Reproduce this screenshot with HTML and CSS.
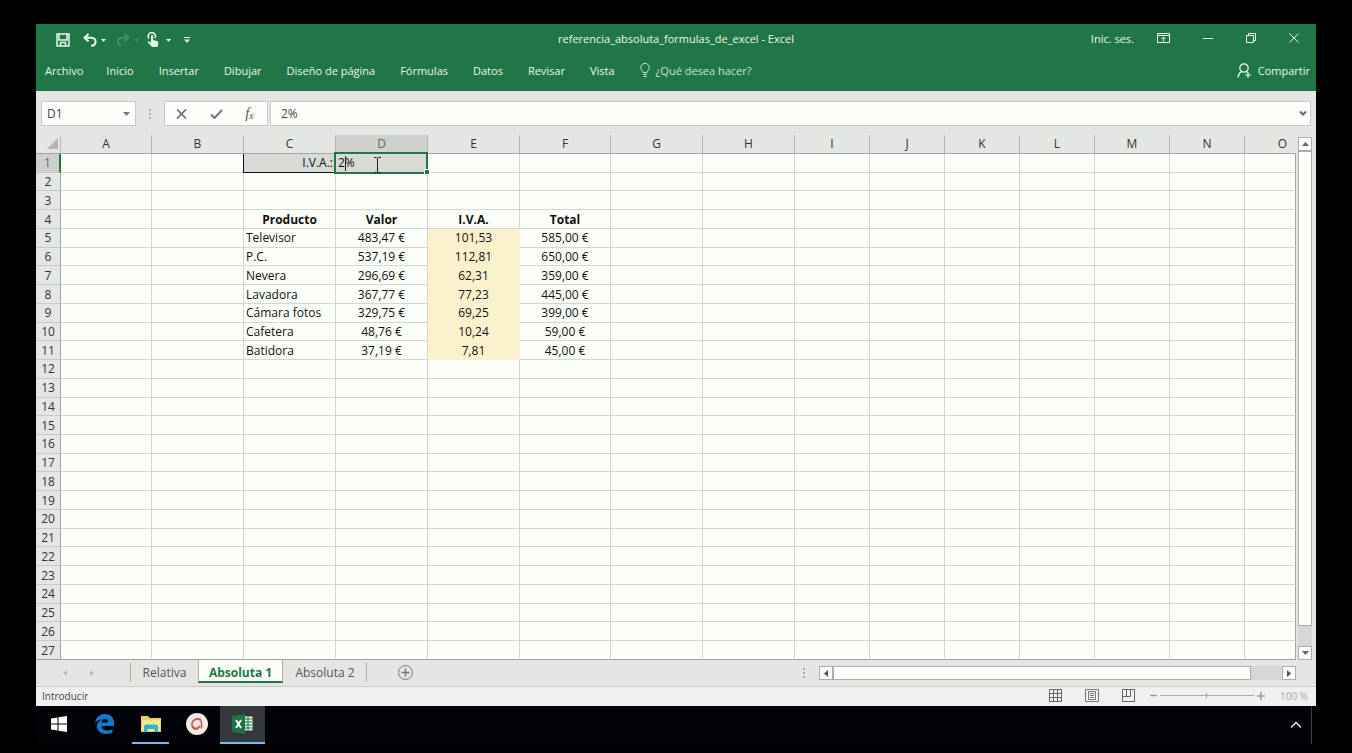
FILE: index.html
```html
<!DOCTYPE html>
<html lang="es">
<head>
<meta charset="utf-8">
<title>referencia_absoluta_formulas_de_excel - Excel</title>
<link rel="stylesheet" href="styles.css">
</head>
<body>
<div class="desktop">
<main class="app">
  <header class="ribbon">
    <div class="titlebar">
      <div class="quick">
        <button class="icon-btn save" aria-label="Guardar"><svg width="14" height="14" viewBox="0 0 14 14" fill="none" stroke="currentColor" stroke-width="1.500"><path d="M1 1h12v12H1zM3 1v6h8V1M4.500 13V9.500h5V13"/></svg></button>
        <button class="icon-btn undo" aria-label="Deshacer"><svg width="14" height="14" viewBox="0 0 14 14" fill="none" stroke="currentColor" stroke-width="2"><path d="M5.500 1L1.500 4.700l4 3.800M2 4.700h6.500c5.500 0 5.500 8-.5 8"/></svg></button>
        <button class="icon-btn caret" aria-label="Opciones de deshacer"><svg width="5" height="3" viewBox="0 0 5 3" fill="currentColor"><path d="M0 0h5L2.500 3z"/></svg></button>
        <button class="icon-btn redo" aria-label="Rehacer" disabled><svg width="14" height="14" viewBox="0 0 14 14" fill="none" stroke="currentColor" stroke-width="2"><path d="M8.500 1l4 3.700-4 3.800M12 4.700H6c-6 0-5 7-1 8"/></svg></button>
        <button class="icon-btn caret dim" aria-label="Opciones de rehacer" disabled><svg width="5" height="3" viewBox="0 0 5 3" fill="currentColor"><path d="M0 0h5L2.500 3z"/></svg></button>
        <button class="icon-btn touch" aria-label="Modo mouse o táctil"><svg width="12" height="16" viewBox="0 0 12 16"><path d="M2 6.500A3.600 3.600 0 1 1 8 6" fill="none" stroke="currentColor" stroke-width="1.500"/><path d="M4 4c0-1.500 2.200-1.500 2.200 0v4l4.300 1.200c1 .3 1 1 .8 2L10.500 15H5L1 10.500c-.5-1 .5-1.600 1.300-1L4 10.700z" fill="currentColor"/></svg></button>
        <button class="icon-btn caret" aria-label="Opciones de modo"><svg width="5" height="3" viewBox="0 0 5 3" fill="currentColor"><path d="M0 0h5L2.500 3z"/></svg></button>
        <button class="icon-btn custom" aria-label="Personalizar barra"><svg width="6" height="6" viewBox="0 0 6 6" fill="currentColor"><path d="M0 0h6v1H0zM0 2.500h6L3 6z"/></svg></button>
      </div>
      <h1 class="title">referencia_absoluta_formulas_de_excel - Excel</h1>
      <div class="window-controls">
        <button class="signin">Inic. ses.</button>
        <button class="icon-btn" aria-label="Opciones de cinta"><svg width="13" height="10" viewBox="0 0 13 10" fill="none" stroke="currentColor"><path d="M.5.5h12v9H.5zM.5 2.500h12M6.500 8.500V4M4.500 6l2-2 2 2"/></svg></button>
        <button class="icon-btn" aria-label="Minimizar"><svg width="10" height="10" viewBox="0 0 10 10" stroke="currentColor"><path d="M0 5.500h10"/></svg></button>
        <button class="icon-btn" aria-label="Restaurar"><svg width="10" height="10" viewBox="0 0 10 10" fill="none" stroke="currentColor"><path d="M.5 2.500h7v7h-7zM2.500 2.500v-2h7v7h-2"/></svg></button>
        <button class="icon-btn" aria-label="Cerrar"><svg width="10" height="10" viewBox="0 0 10 10" stroke="currentColor"><path d="M.5.5l9 9M9.500.5l-9 9"/></svg></button>
      </div>
    </div>
    <nav class="menu">
      <button class="menu-item file">Archivo</button>
      <button class="menu-item">Inicio</button>
      <button class="menu-item">Insertar</button>
      <button class="menu-item">Dibujar</button>
      <button class="menu-item">Diseño de página</button>
      <button class="menu-item">Fórmulas</button>
      <button class="menu-item">Datos</button>
      <button class="menu-item">Revisar</button>
      <button class="menu-item">Vista</button>
      <button class="menu-item tell"><svg width="10" height="14" viewBox="0 0 10 14" fill="none" stroke="currentColor"><path d="M3 9.500C3 7.500.7 7 .7 4.700a4.300 4.300 0 0 1 8.600 0C9.300 7 7 7.500 7 9.500zM3 11.500h4M3.500 13.500h3"/></svg>¿Qué desea hacer?</button>
      <button class="menu-item share"><svg width="15" height="15" viewBox="0 0 15 15" fill="none" stroke="currentColor" stroke-width="1.200"><circle cx="7" cy="5" r="4.200"/><path d="M1 14.500c.3-3.500 2-5 3.500-6M9.500 8.500l1 .7M11 9v6M8 12h6"/></svg>Compartir</button>
    </nav>
  </header>

  <section class="formula-bar">
    <div class="name-box"><input aria-label="Cuadro de nombres" value="D1"><svg width="7" height="4" viewBox="0 0 7 4" fill="#777"><path d="M0 0h7L3.500 4z"/></svg></div>
    <svg class="grip" width="2" height="10" viewBox="0 0 2 10" fill="#aaa"><path d="M0 0h2v2H0zM0 4h2v2H0zM0 8h2v2H0z"/></svg>
    <div class="formula-actions">
      <button aria-label="Cancelar"><svg width="11" height="10" viewBox="0 0 11 10" stroke="#666" stroke-width="1.600"><path d="M1 .5l9 9M10 .5l-9 9"/></svg></button>
      <button aria-label="Introducir"><svg width="13" height="10" viewBox="0 0 13 10" fill="none" stroke="#777" stroke-width="2"><path d="M1 5.500L4.500 9 12 1"/></svg></button>
      <button class="fx" aria-label="Insertar función"><i>f</i><small>x</small></button>
    </div>
    <div class="formula-box"><input aria-label="Barra de fórmulas" value="2%"><svg width="8" height="5" viewBox="0 0 8 5" fill="none" stroke="#666" stroke-width="2"><path d="M1 .5l3 3 3-3"/></svg></div>
  </section>

  <section class="workspace">
    <div class="sheet">
      <table class="grid">
        <colgroup><col class="c-head"><col class="c-edge"><col class="c-wide"><col class="c-wide"><col class="c-wide"><col class="c-wide"><col class="c-edge"><col class="c-wide"><col class="c-wide"><col class="c-mid"><col class="c-mid"><col class="c-mid"><col class="c-mid"><col class="c-mid"><col class="c-mid"><col></colgroup>
        <thead><tr id="letters"></tr></thead>
        <tbody id="rows"></tbody>
      </table>
    </div>
    <div class="vscroll">
      <button class="scroll-btn" aria-label="Subir"><svg width="7" height="4" viewBox="0 0 7 4" fill="#666"><path d="M0 4h7L3.500 0z"/></svg></button>
      <div class="vtrack"><div class="vthumb"></div></div>
      <button class="scroll-btn" aria-label="Bajar"><svg width="7" height="4" viewBox="0 0 7 4" fill="#666"><path d="M0 0h7L3.500 4z"/></svg></button>
    </div>
  </section>

  <section class="tabs-row">
    <div class="tabs">
      <div class="tab-nav">
        <button class="icon-btn" aria-label="Hoja anterior"><svg width="4" height="6" viewBox="0 0 4 6" fill="#bbb"><path d="M4 0v6L0 3z"/></svg></button>
        <button class="icon-btn" aria-label="Hoja siguiente"><svg width="4" height="6" viewBox="0 0 4 6" fill="#bbb"><path d="M0 0v6l4-3z"/></svg></button>
      </div>
      <button class="tab first">Relativa</button>
      <button class="tab active">Absoluta 1</button>
      <button class="tab last">Absoluta 2</button>
      <button class="icon-btn add" aria-label="Hoja nueva"><svg width="15" height="15" viewBox="0 0 15 15" fill="none" stroke="#777"><circle cx="7.500" cy="7.500" r="7"/><path d="M7.500 3.500v8M3.500 7.500h8" stroke-width="1.500"/></svg></button>
      <svg class="grip tab-grip" width="2" height="10" viewBox="0 0 2 10" fill="#aaa"><path d="M0 0h2v2H0zM0 4h2v2H0zM0 8h2v2H0z"/></svg>
    </div>
    <div class="hscroll">
      <button class="scroll-btn" aria-label="Izquierda"><svg width="4" height="7" viewBox="0 0 4 7" fill="#555"><path d="M4 0v7L0 3.500z"/></svg></button>
      <div class="htrack"><div class="hthumb"></div></div>
      <button class="scroll-btn" aria-label="Derecha"><svg width="4" height="7" viewBox="0 0 4 7" fill="#555"><path d="M0 0v7l4-3.500z"/></svg></button>
    </div>
  </section>

  <footer class="status">
    <span>Introducir</span>
    <div class="views">
      <button class="icon-btn" aria-label="Normal"><svg width="13" height="13" viewBox="0 0 13 13" fill="none" stroke="#666"><path d="M.5.5h12v12H.5zM4.500.5v12M8.500.5v12M.5 4.500h12M.5 8.500h12"/></svg></button>
      <button class="icon-btn" aria-label="Diseño de página"><svg width="14" height="13" viewBox="0 0 14 13" fill="none" stroke="#777"><path d="M.5.5h13v12H.5zM3.500 2.500h7v8h-7zM5 4.500h4M5 6.500h4M5 8.500h4"/></svg></button>
      <button class="icon-btn" aria-label="Saltos de página"><svg width="13" height="13" viewBox="0 0 13 13" fill="none" stroke="#666"><path d="M.5.5h12v12H.5zM.5 7.500h8v-7M4.500.5v7"/></svg></button>
    </div>
    <div class="zoom">
      <button class="icon-btn" aria-label="Alejar"><svg width="7" height="7" viewBox="0 0 7 7" stroke="#999" stroke-width="1.500"><path d="M0 3.500h7"/></svg></button>
      <input class="zoom-range" type="range" aria-label="Zoom" min="0" max="100" value="50">
      <button class="icon-btn" aria-label="Acercar"><svg width="8" height="8" viewBox="0 0 8 8" stroke="#999" stroke-width="1.500"><path d="M0 4h8M4 0v8"/></svg></button>
    </div>
    <span class="percent">100 %</span>
  </footer>
</main>

<nav class="taskbar">
  <button class="task" aria-label="Inicio de Windows"><svg width="16" height="16" viewBox="0 0 16 16" fill="#fff"><path d="M0 2.500l6.500-1V7.500H0zM7.500 1.300L16 0v7.500H7.500zM0 8.500h6.500v6L0 13.500zM7.500 8.500H16V16l-8.500-1.300z"/></svg></button>
  <button class="task" aria-label="Edge"><svg width="20" height="20" viewBox="0 0 20 20" fill="#1277cf"><path d="M0 9C1 3 5 0 10 0c6 0 9 4 9 9v3H6.500c.5 5 7 5.500 11 3v3.500C10 22 1.500 19 2 12c.2-3 2-5.500 5-6.500C4.500 5.500 1.500 7 0 9zm6.500-.5H13C13 3.500 7 3.500 6.500 8.500z"/></svg></button>
  <button class="task open" aria-label="Explorador de archivos"><svg width="20" height="18" viewBox="0 0 20 18"><path d="M0 1h7l2 2h11v14H0z" fill="#f3ce63"/><path d="M1 5h18v11H1z" fill="#fbe792"/><path d="M3 17v-6l1.500-1.500h11L17 11v6h-3.500v-3h-7v3z" fill="#2fb2d4"/></svg></button>
  <button class="task" aria-label="Grabador"><svg width="22" height="22" viewBox="0 0 22 22"><circle cx="11" cy="11" r="11" fill="#f3e9e7"/><path d="M12.500 15.500C8 17.500 5.500 14 6 11c.5-6 9.500-6.500 9.500-1v5.500M15 6.500c-4-2-9 0-9 4.500s6 6 8 1.500" fill="none" stroke="#cf5348" stroke-width="1.500"/></svg></button>
  <button class="task open current" aria-label="Excel"><svg width="21" height="20" viewBox="0 0 21 20"><path d="M12 2.500h8.500v14H12z" fill="#e8f3ea"/><path d="M12 5h8M12 8h8M12 11h8M12 14h8M16 3v13" stroke="#1f7244"/><path d="M0 2l13-2v20L0 18z" fill="#1f7244"/><path d="M4 6l5 8M9 6l-5 8" stroke="#fff" stroke-width="1.800"/></svg></button>
  <button class="tray" aria-label="Iconos ocultos"><svg width="12" height="8" viewBox="0 0 12 8" fill="none" stroke="#eee" stroke-width="1.500"><path d="M1 6.500l5-5 5 5"/></svg></button>
</nav>
</div>
<script src="sheet.js"></script>
</body>
</html>
```
FILE: styles.css
```css
* { box-sizing: border-box; }
body { margin: 0; background: #000; font-family: "Open Sans", "Noto Sans", sans-serif; font-size: 11px; color: #333; }
button, input { font: inherit; color: inherit; border: 0; padding: 0; margin: 0; background: none; }
button { display: inline-flex; align-items: center; justify-content: center; white-space: nowrap; }
svg { display: block; flex: none; }
.desktop { display: flex; flex-direction: column; height: 100vh; min-height: 620px; padding: 24px 36px 9px; }
.app { flex: 1; min-height: 0; display: flex; flex-direction: column; background: #e4e6e3; }

.ribbon { background: #217647; color: #e9f7ec; padding-bottom: 3px; }
.titlebar { display: grid; grid-template-columns: 1fr auto 1fr; align-items: center; height: 28px; }
.title { margin: 0; font-size: 11px; font-weight: 400; }
.quick { display: flex; align-items: center; padding: 4px 0 0 20px; }
.icon-btn { flex: none; }
.undo { margin-left: 13px; }
.caret { margin-left: 4px; }
.redo { margin-left: 10px; }
.redo, .dim { color: #44906a; }
.touch { margin-left: 8px; }
.touch + .caret { margin-left: 7px; }
.custom { margin-left: 13px; }
.window-controls { display: flex; align-items: center; justify-content: flex-end; gap: 33px; padding-right: 17px; }
.signin { margin-right: -10px; }
.menu { display: flex; align-items: center; gap: 25px; height: 36px; padding: 0 6px 0 9px; }
.file { margin-right: -2px; }
.tell { gap: 6px; color: #c4e6cf; }
.share { gap: 6px; margin-left: auto; }

.formula-bar { display: flex; align-items: center; padding: 10px 5px 9px; font-size: 12px; }
.name-box, .formula-actions, .formula-box { display: flex; align-items: center; height: 25px; background: #fdfffb; border: 1px solid #c9cbc8; }
.name-box { width: 95px; padding: 0 5px; }
.name-box input, .formula-box input { flex: 1; min-width: 0; width: 0; color: #444; }
.grip { margin: 0 13px; }
.formula-actions { width: 104px; justify-content: space-around; padding: 0 2px 0 0; margin-right: 2px; }
.fx { font-family: "Liberation Serif", serif; font-size: 15px; color: #555; }
.fx small { font-size: 10px; font-style: italic; padding-top: 4px; }
.formula-box { flex: 1; padding: 0 3px 0 10px; }

.workspace { flex: 1; min-height: 0; display: flex; gap: 2px; padding-right: 4px; }
.sheet { flex: 1; min-width: 0; height: 100%; }
.grid { width: 100%; height: 100%; table-layout: fixed; border-collapse: separate; border-spacing: 0; font-size: 12px; line-height: 16px; color: #111; }
.c-head { width: 25px; }
.c-edge { width: 91px; }
.c-wide { width: 92px; }
.c-mid { width: 75px; }
.grid th, .grid td { padding: 1px 0 0; overflow: hidden; white-space: nowrap; font-weight: 400; }
.grid thead th { height: 19px; padding: 0 0 1px; border-right: 1px solid #b4b6b3; border-bottom: 1px solid #a2a4a1; background: #e4e6e3; color: #333; }
.grid thead th:last-child { padding-left: 24px; border-right: 0; }
.grid thead th.corner { padding: 0 2px 1px 0; }
.corner svg { margin-left: auto; }
.grid tbody th { border-right: 1px solid #a2a4a1; border-bottom: 1px solid #c8cac7; color: #333; }
.grid td { background: #fdfffb; border-right: 1px solid #d3d6d1; border-bottom: 1px solid #d3d6d1; text-align: center; }
.grid td:last-child { border-right-color: #a2a4a1; }
.grid tbody tr:last-child > * { border-bottom-color: #a2a4a1; }
.grid .selected { background: #cdd0cc; color: #5c6e63; }
.grid tbody .selected { border-right: 2px solid #217647; }
.grid .name { text-align: left; padding-left: 2px; }
.grid .head { font-weight: 700; }
.grid .tax { background: #fcf1cd; border-color: #fcf1cd; }
.grid .label { text-align: right; padding-right: 2px; background: #d8dad6; border-bottom-color: #111; box-shadow: -1px 0 #111; overflow: visible; position: relative; }
.grid .editing { position: relative; overflow: visible; background: #d8dad6; text-align: left; }
.editing::before { content: ""; position: absolute; inset: -2px -1px -2px -2px; border: 2px solid #217647; }
.editing::after { content: ""; position: absolute; right: -2px; bottom: -2px; width: 4px; height: 4px; background: #217647; outline: 1px solid #fdfffb; }
.editing input { display: block; width: 100%; padding-left: 2px; line-height: 16px; height: 16px; }
.text-caret { position: absolute; left: 9px; top: 2px; width: 1px; height: 15px; background: #223; }
.pointer { position: absolute; left: 37px; top: 3px; z-index: 1; }

.scroll-btn { flex: none; width: 14px; height: 14px; background: #fdfffb; border: 1px solid #acaeab; }
.vscroll { display: flex; flex-direction: column; width: 14px; padding-top: 2px; }
.vtrack { flex: 1; display: flex; flex-direction: column; background: #d6d8d5; }
.vthumb { height: 96%; background: #fdfffb; border: 1px solid #acaeab; }

.tabs-row { display: grid; grid-template-columns: minmax(0, 783px) 1fr; height: 27px; border-bottom: 1px solid #c9cbc8; padding-right: 20px; }
.tabs { display: flex; align-items: flex-start; font-size: 12px; color: #555; }
.tab-nav { display: flex; align-items: center; justify-content: center; gap: 23px; width: 84px; height: 25px; }
.tab { position: relative; height: 23px; padding: 1px 12px 0; }
.first { width: 78px; padding-left: 23px; }
.first::before, .last::after { content: ""; position: absolute; top: 3px; bottom: 1px; width: 1px; background: #aaa; }
.first::before { left: 10px; }
.last { width: 84px; }
.last::after { right: 0; }
.active { background: #fdfffb; color: #217647; font-weight: 700; width: 85px; padding-top: 3px; border: 1px solid #acaeab; border-top: 0; border-bottom: 2px solid #217647; }
.add { height: 25px; margin-left: 31px; }
.tab-grip { margin: 8px 14px 0 auto; }
.hscroll { display: flex; padding-top: 6px; }
.htrack { flex: 1; height: 14px; background: #d6d8d5; }
.hthumb { width: 93%; height: 14px; background: #fdfffb; border: 1px solid #acaeab; }

.status { display: flex; align-items: center; height: 19px; padding: 0 8px 2px 6px; background: #eef1ed; font-size: 10px; color: #444; }
.views { display: flex; gap: 23px; margin-left: auto; }
.zoom { display: flex; align-items: center; gap: 3px; margin-left: 15px; }
.zoom-range { appearance: none; width: 94px; height: 7px; background: linear-gradient(#aaa, #aaa) center / 100% 1px no-repeat; }
.zoom-range::-webkit-slider-thumb { appearance: none; width: 1px; height: 5px; background: #999; }
.percent { margin-left: 15px; color: #aaa; }

.taskbar { display: flex; height: 38px; margin-right: 4px; border-right: 1px solid #3a3d3e; background: #000306; }
.task { width: 45px; margin-right: 1px; border-bottom: 2px solid transparent; }
.task.open { width: 37px; margin: 0 5px 0 4px; border-bottom-color: #76b9ed; }
.task.current { width: 45px; margin: 0; background: #34383a; }
.tray { width: 30px; margin-left: auto; }
```
FILE: sheet.js
```js
const letters = "ABCDEFGHIJKLMNO".split("");
const rowCount = 27;
const products = [
  ["Televisor", "483,47 €", "101,53", "585,00 €"],
  ["P.C.", "537,19 €", "112,81", "650,00 €"],
  ["Nevera", "296,69 €", "62,31", "359,00 €"],
  ["Lavadora", "367,77 €", "77,23", "445,00 €"],
  ["Cámara fotos", "329,75 €", "69,25", "399,00 €"],
  ["Cafetera", "48,76 €", "10,24", "59,00 €"],
  ["Batidora", "37,19 €", "7,81", "45,00 €"]
];
const cells = {
  C1: { text: "I.V.A.:", kind: "label" },
  D1: {
    kind: "editing",
    html: '<input aria-label="Celda D1" value="2%"><span class="text-caret"></span>' +
      '<svg class="pointer" width="9" height="16" viewBox="0 0 9 16" fill="none" stroke="#222"><path d="M1 .5h2.500l1 1 1-1H8M4.500 1v14M1 15.500h2.500l1-1 1 1H8"/></svg>'
  }
};
["Producto", "Valor", "I.V.A.", "Total"].forEach((text, i) => {
  cells["CDEF"[i] + 4] = { text, kind: "head" };
});
products.forEach((values, r) => values.forEach((text, i) => {
  cells["CDEF"[i] + (r + 5)] = { text, kind: ["name", "money", "tax", "money"][i] };
}));

const letterRow = document.getElementById("letters");
letterRow.innerHTML =
  '<th class="corner"><svg width="11" height="11" viewBox="0 0 11 11" fill="#b2b4b1"><path d="M11 0v11H0z"/></svg></th>' +
  letters.map(l => `<th scope="col"${l === "D" ? ' class="selected"' : ""}>${l}</th>`).join("");

const body = document.getElementById("rows");
for (let r = 1; r <= rowCount; r++) {
  const row = document.createElement("tr");
  row.innerHTML = `<th scope="row"${r === 1 ? ' class="selected"' : ""}>${r}</th>` +
    letters.map(l => {
      const cell = cells[l + r];
      return cell ? `<td class="${cell.kind}">${cell.html || cell.text}</td>` : "<td></td>";
    }).join("");
  body.appendChild(row);
}
```
